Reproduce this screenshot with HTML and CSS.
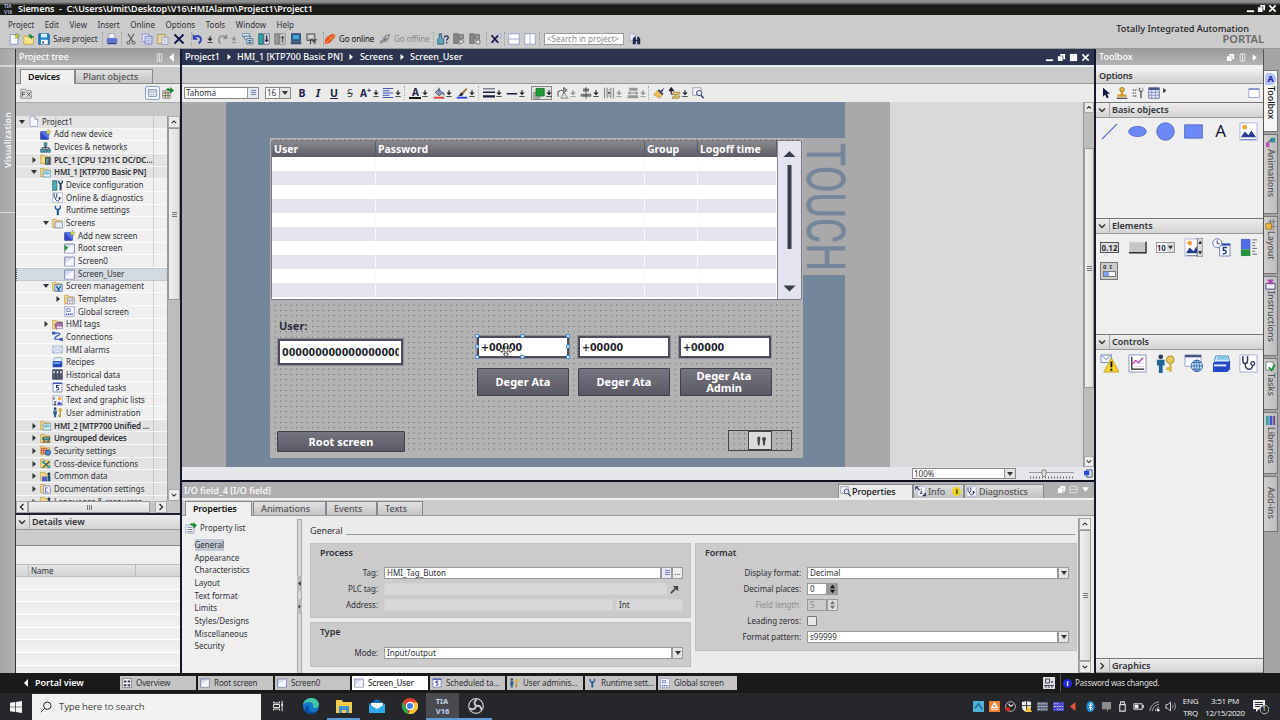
FILE: index.html
```html
<!DOCTYPE html>
<html lang="en">
<head>
    <meta charset="utf-8">
    <title>Siemens - Project1</title>
    <link rel="stylesheet" href="styles.css">
</head>
<body>
    <!-- icon set -->
    <svg class="sprite" aria-hidden="true">
        <symbol id="dd" viewBox="0 0 6 10"><path d="M0 4h6L3 7z M0 8h6v1H0z M2.4 1h1.2v4H2.4z" fill="currentColor"/></symbol>
        <symbol id="tri-d" viewBox="0 0 8 8"><path d="M1 2h6L4 6z" fill="currentColor"/></symbol>
        <symbol id="tri-r" viewBox="0 0 8 8"><path d="M2.5 1v6L6 4z" fill="currentColor"/></symbol>
        <symbol id="tri-l" viewBox="0 0 8 8"><path d="M6 0v8L2 4z" fill="currentColor"/></symbol>
        <symbol id="chev-d" viewBox="0 0 8 8"><path d="M1 2.5l3 3 3-3" fill="none" stroke="currentColor" stroke-width="1.4"/></symbol>
        <symbol id="chev-u" viewBox="0 0 8 8"><path d="M1 5.5l3-3 3 3" fill="none" stroke="currentColor" stroke-width="1.4"/></symbol>
        <symbol id="chev-l" viewBox="0 0 8 8"><path d="M5.5 1l-3 3 3 3" fill="none" stroke="currentColor" stroke-width="1.4"/></symbol>
        <symbol id="chev-r" viewBox="0 0 8 8"><path d="M2.5 1l3 3-3 3" fill="none" stroke="currentColor" stroke-width="1.4"/></symbol>
        <symbol id="w-min" viewBox="0 0 10 10"><path d="M1 7h8v2H1z" fill="#fff"/></symbol>
        <symbol id="w-rest" viewBox="0 0 10 10"><path d="M3.5 1H9v6H7V3H3.5z M1 3.5h5.2V9H1z" fill="#fff"/></symbol>
        <symbol id="w-max" viewBox="0 0 10 10"><path d="M1 1h8v8H1z" fill="#fff"/><path d="M1 2.6h8" stroke="#ccd" stroke-width=".6"/></symbol>
        <symbol id="w-close" viewBox="0 0 10 10"><path d="M1.5 1.5l7 7M8.5 1.5l-7 7" stroke="#fff" stroke-width="1.8"/></symbol>
        <symbol id="w-pin" viewBox="0 0 10 10"><path d="M2.5 1h5v8h-5zM5 1v8" fill="none" stroke="#e8e8ec"/></symbol>
        <symbol id="w-split" viewBox="0 0 10 10"><path d="M1 1.5h8v7H1zM1 5h8" fill="none" stroke="#e4e4e4"/></symbol>

        <symbol id="new" viewBox="0 0 16 16"><path d="M3 2h7l3 3v10H3z" fill="#fff" stroke="#7280c8"/><path d="M12 0l1 2.5L16 3l-2.4 1.6.6 3L12 6 9.700 7.500l.8-2.700L8.500 3l2.700-.3z" fill="#c8d838" stroke="#55662a" stroke-width=".5"/></symbol>
        <symbol id="open" viewBox="0 0 16 16"><path d="M1 4h5l1 2h7v9H1z" fill="#f8e08c" stroke="#b99b36"/><path d="M6 4c2-3 5-3 6 0h3l-4 4-3.500-4h2c-1-1-2-1-3.500 0z" fill="#168a36"/></symbol>
        <symbol id="save" viewBox="0 0 16 16"><path d="M1 1h13l1 2v12H1z" fill="#1f83c8" stroke="#0f4a94"/><path d="M4 1h8v5H4z" fill="#d7ecf9"/><path d="M4 9h9v6H4z" fill="#fff"/><path d="M6 11h2v3H6z" fill="#113e80"/></symbol>
        <symbol id="print" viewBox="0 0 16 16"><path d="M4 1h8l-1 6H3z" fill="#f2f4ff" stroke="#7d83a8" stroke-width=".8"/><path d="M1 7h14v6H1z" fill="#5d6fd0"/><path d="M2 13h12v2H2z" fill="#31408e"/></symbol>
        <symbol id="cut" viewBox="0 0 16 16"><path d="M4 1l6 10M12 1L6 11" stroke="#555" stroke-width="1.500"/><circle cx="4.500" cy="13" r="2" fill="none" stroke="#555" stroke-width="1.300"/><circle cx="11.500" cy="13" r="2" fill="none" stroke="#555" stroke-width="1.300"/></symbol>
        <symbol id="copy" viewBox="0 0 16 16"><path d="M1.500 1.500h9v10h-9z" fill="#e6e8fa" stroke="#7a80c0"/><path d="M5.500 4.500h9v10h-9z" fill="#fff" stroke="#4a55b8"/><path d="M7 7h6M7 9.500h6M7 12h6" stroke="#5561c0"/></symbol>
        <symbol id="paste" viewBox="0 0 16 16"><path d="M1 2h10v12H1z" fill="#eadb9b" stroke="#a08a4a"/><path d="M6.500 5.500h8v10h-8z" fill="#fff" stroke="#7a83ad"/><path d="M8 8h5M8 10.500h5M8 13h5" stroke="#8a93c0"/></symbol>
        <symbol id="del" viewBox="0 0 16 16"><path d="M2 2l12 12M14 2L2 14" stroke="#15184a" stroke-width="2.500"/></symbol>
        <symbol id="undo" viewBox="0 0 16 16"><path d="M3 5c8-3 12 3 6 9" fill="none" stroke="#3443b4" stroke-width="2.600"/><path d="M1 1v8h7z" fill="#3443b4"/></symbol>
        <symbol id="redo" viewBox="0 0 16 16"><path d="M13 5C5 2 1 8 6 14" fill="none" stroke="#8b8b8b" stroke-width="2"/><path d="M15 1v7H9z" fill="#8b8b8b"/></symbol>
        <symbol id="compile" viewBox="0 0 16 16"><path d="M1 1h9v4H1zM3 4h8v4H3z" fill="#fff" stroke="#3b6a92"/><path d="M6.500 7.500h8v7h-8z" fill="#d9ecf4" stroke="#33577c"/><path d="M8 10h5M8 12.500h5M10.500 9v5" stroke="#33577c"/></symbol>
        <symbol id="dl" viewBox="0 0 16 16"><path d="M1 1h6v14H1z" fill="#38a0a8" stroke="#174f5c"/><path d="M8 1h7v14H8z" fill="#eef" stroke="#555"/><path d="M10.500 3h2v6h2l-3 4-3-4h2z" fill="#1d2350"/></symbol>
        <symbol id="ul" viewBox="0 0 16 16"><path d="M1 1h6v14H1z" fill="#9a9a9a" stroke="#666"/><path d="M8 1h7v14H8z" fill="#ddd" stroke="#777"/><path d="M10.500 13h2V7h2l-3-4-3 4h2z" fill="#555"/></symbol>
        <symbol id="sim" viewBox="0 0 16 16"><path d="M2 1h12v9H2z" fill="#26669a" stroke="#1e3358"/><path d="M4 3h8v5H4z" fill="#48a8d0"/><path d="M1 11h14v4H1z" fill="#38507c"/></symbol>
        <symbol id="rt" viewBox="0 0 16 16"><path d="M1 1h11v9H1z" fill="#999" stroke="#555"/><path d="M3 3h7v4H3z" fill="#ddd"/><path d="M6 15V9h3l1 3 2-3h3M12 9v6" fill="none" stroke="#444" stroke-width="1.500"/></symbol>
        <symbol id="online" viewBox="0 0 16 16"><path d="M1 15c0-6 1-9 5-11l5-3 4 1-1 4-4 5c-2 3-5 3-9 4z" fill="#e8531c"/><path d="M1 15L14 2M7 5l4 4" stroke="#fbb27f"/></symbol>
        <symbol id="offline" viewBox="0 0 16 16"><path d="M1 15l1-5 4-2 2-5 7-2-2 7-5 4-3 1z" fill="#8f8f8f"/><path d="M4 5l7 7" stroke="#666"/><path d="M9 5l3-1-1 3z" fill="#eee"/></symbol>
        <symbol id="access" viewBox="0 0 16 16"><path d="M3 1h3v5l3 2v7H1V8l2-2z" fill="#58a8b8" stroke="#2c4b70"/><path d="M10 6c0-3 5-3 5 0 0 2-2 2-2 4M13 12v2" fill="none" stroke="#25305c" stroke-width="1.800"/></symbol>
        <symbol id="startcpu" viewBox="0 0 16 16"><path d="M1 1h6v13H1z" fill="#888" stroke="#666"/><path d="M8 2h6v6H8z" fill="#999" stroke="#666"/><path d="M9 8l6 3.500L9 15z" fill="#eee" stroke="#555"/></symbol>
        <symbol id="stopcpu" viewBox="0 0 16 16"><path d="M1 1h6v13H1z" fill="#888" stroke="#666"/><path d="M8 2h6v6H8z" fill="#999" stroke="#666"/><path d="M9.500 9.500h5v5h-5z" fill="#eee" stroke="#555"/></symbol>
        <symbol id="crossref" viewBox="0 0 16 16"><path d="M6 6h9V1h-4M6 15v-3h5" fill="#d5daf4" stroke="#9aa0c8"/><path d="M2 3l9 10M11 3L2 13" stroke="#15184a" stroke-width="2.400"/></symbol>
        <symbol id="splith" viewBox="0 0 16 16"><path d="M1 1h14v14H1zM1 8h14" fill="#fff" stroke="#8392cb"/></symbol>
        <symbol id="splitv" viewBox="0 0 16 16"><path d="M1 1h14v14H1zM8 1v14" fill="#fff" stroke="#8392cb"/></symbol>
        <symbol id="pane" viewBox="0 0 16 16"><path d="M1 2h14v12H1z" fill="#fff" stroke="#8392cb"/><path d="M1 3h14" stroke="#8392cb" stroke-width="2"/></symbol>
        <symbol id="find" viewBox="0 0 16 16"><path d="M1 1h7v9H1z" fill="#e8e8fb" stroke="#aab"/><path d="M5 15V8l2-3h2v4h2V5h2l2 3v7h-4v-4H9v4z" fill="#1e2554"/></symbol>

        <symbol id="page" viewBox="0 0 16 16"><path d="M3 1h7l4 4v10H3z" fill="#f8f8ff" stroke="#8c93b8"/><path d="M10 1v4h4" fill="#ccd" stroke="#8c93b8"/></symbol>
        <symbol id="addbox" viewBox="0 0 16 16"><path d="M1 4h11v11H1z" fill="#3048d0" stroke="#1b2778"/><path d="M1 4l2-1h10v10l-1 2" fill="#5870e8"/><path d="M12 0l1 3 3 .5-2.200 1.800.7 3L12 6.500 9.800 8.300l.6-3L8.500 3.500l2.700-.5z" fill="#d5e24a" stroke="#76862a" stroke-width=".5"/></symbol>
        <symbol id="net" viewBox="0 0 16 16"><path d="M6 1h4v5H6zM1 10h4v5H1zM6 10h4v5H6zM11 10h4v5h-4z" fill="#4aa3b8" stroke="#23405c" stroke-width=".8"/><path d="M8 6v4M3 10V8h10v2" fill="none" stroke="#222"/></symbol>
        <symbol id="folder" viewBox="0 0 16 16"><path d="M1 2h5l1 2h7v10H1z" fill="#f6d988" stroke="#bb9838"/></symbol>
        <symbol id="plc" viewBox="0 0 16 16"><use href="#folder"/><path d="M8 5h7v10H8z" fill="#58666e" stroke="#333"/><path d="M9.500 6h1.500v8H9.500z" fill="#58b8c0"/></symbol>
        <symbol id="hmi" viewBox="0 0 16 16"><use href="#folder"/><path d="M4.500 5.500h11v9h-11z" fill="#e8f4f8" stroke="#4c8fa8"/><path d="M6 7h8v4H6z" fill="#73c2d8"/></symbol>
        <symbol id="devconf" viewBox="0 0 16 16"><path d="M1 1h6v14H1z" fill="#48b0b8" stroke="#1f5560"/><path d="M9 1v3l2 2v9h3V6l2-2V1h-2v3h-3V1z" fill="#27406c"/></symbol>
        <symbol id="diag" viewBox="0 0 16 16"><path d="M1 1h14v14H1z" fill="#f7f7ff" stroke="#a4abd0"/><path d="M3 2v4c0 4 4 4 4 0V2M5 9c0 5 6 5 6 1" fill="none" stroke="#2c3560" stroke-width="1.400"/><circle cx="11" cy="9" r="1.600" fill="#2c3560"/></symbol>
        <symbol id="info" viewBox="0 0 16 16"><path d="M4 1h11v14H4z" fill="#f7f7ff" stroke="#a4abd0"/><path d="M1 1l6 5M1 1h4M1 1v4" stroke="#2c3560" stroke-width="1.600" fill="none"/><path d="M9 7v4M9 4v1.500M7.500 11h3M12 14h3v-3z" stroke="#2c3560" stroke-width="1.600" fill="#2c3560"/></symbol>
        <symbol id="wrench" viewBox="0 0 16 16"><path d="M4 1v4l3 3v7h3V8l3-3V1h-2v4H6V1z" fill="#24589c"/></symbol>
        <symbol id="screens" viewBox="0 0 16 16"><use href="#folder"/><path d="M4.500 5.500h11v9h-11z" fill="#e4e8f8" stroke="#6a78a8"/></symbol>
        <symbol id="screen" viewBox="0 0 16 16"><path d="M1 1.500h14v13H1z" fill="#d6dcf4" stroke="#5a6494"/><path d="M2 10L14 2v12H2z" fill="#f4f5fd"/></symbol>
        <symbol id="root" viewBox="0 0 16 16"><use href="#screen"/><path d="M1 3l5 4-5 5z" fill="#19963c"/></symbol>
        <symbol id="smgmt" viewBox="0 0 16 16"><use href="#folder"/><path d="M4 5h11v10H4z" fill="#bcd4ee" stroke="#4a6ca0"/><path d="M6 6l3.500 4L13 6v3l-2 2v4H8v-4L6 9z" fill="#24509c"/></symbol>
        <symbol id="templ" viewBox="0 0 16 16"><use href="#folder"/><path d="M5 5.500h10v9H5zM5 9h10M8 9v5M12 6v8" fill="#eee" stroke="#888ca0"/></symbol>
        <symbol id="global" viewBox="0 0 16 16"><path d="M1 1h14v14H1z" fill="#f8f8ff" stroke="#8890c0"/><path d="M4 4h5v4H4z" fill="none" stroke="#4055b0"/><path d="M3 12h10" stroke="#4055b0" stroke-width="2" stroke-dasharray="2 1"/></symbol>
        <symbol id="tags" viewBox="0 0 16 16"><use href="#folder"/><path d="M4 8l4-3h7v9H6z" fill="#a674a8" stroke="#5c3770"/><path d="M7 11h8v3H7z" fill="#f4e6f4"/></symbol>
        <symbol id="conn" viewBox="0 0 16 16"><path d="M2 3h8c6 3-8 4-6 9h8" fill="none" stroke="#3a5ac0" stroke-width="1.800"/><path d="M0 1h5v4H0zM11 10h5v4h-5z" fill="#3a5ac0"/></symbol>
        <symbol id="mail" viewBox="0 0 16 16"><path d="M1 3h14v10H1zl7 6 7-6M1 13l5-5M15 13l-5-5" fill="#e6ecfb" stroke="#8ea0d0"/></symbol>
        <symbol id="recipe" viewBox="0 0 16 16"><path d="M4 1h10l1 6H2z" fill="#e9f4fb" stroke="#6690b8"/><path d="M1 6h13l1 3v5l-2 1H1z" fill="#1f49b4"/><path d="M2 8h10v2H2z" fill="#8fb7ee"/></symbol>
        <symbol id="hist" viewBox="0 0 16 16"><path d="M1 1h4v14H1zM6 1h4v14H6zM11 1h4v14h-4z" fill="#5a6078" stroke="#252a3c"/><path d="M2 3h2v3H2zM7 3h2v3H7zM12 3h2v3h-2z" fill="#e8e8f0"/></symbol>
        <symbol id="task" viewBox="0 0 16 16"><path d="M1.500 1.500h13v13h-13z" fill="#fff" stroke="#5664ac"/><path d="M1 1h14v2H1z" fill="#4658b8"/><path d="M10.500 5H6.500v3c4-1 5 4 0 4" fill="none" stroke="#1c2b60" stroke-width="1.500"/></symbol>
        <symbol id="lists" viewBox="0 0 16 16"><path d="M1 1h14v14H1z" fill="#f6f6ff" stroke="#98a0c8"/><path d="M3 3v4M3 10h3l-3 4h3" fill="none" stroke="#223" stroke-width="1.300"/><circle cx="11" cy="5" r="2.500" fill="#f1b136"/><path d="M7 14l3-5 2 3 1-2 2 4z" fill="#3550b0"/></symbol>
        <symbol id="users" viewBox="0 0 16 16"><circle cx="4.500" cy="2.500" r="2" fill="#284870"/><path d="M2 5h5v6H6v4H3v-4H2z" fill="#286090"/><circle cx="12" cy="4.500" r="3" fill="#d6b446"/><path d="M11 7h2v8h-2zM9 12h2v2H9z" fill="#b8922e"/></symbol>
        <symbol id="ungrp" viewBox="0 0 16 16"><use href="#folder"/><path d="M4 6h10v4H4zM4 13h11M6 10v3M12 10v3" fill="#52b0a0" stroke="#20303c"/></symbol>
        <symbol id="secur" viewBox="0 0 16 16"><use href="#folder"/><path d="M2 5h8v7H2zM2 8h8M5 5v7" fill="#f6b098" stroke="#b84020"/><circle cx="11.500" cy="11" r="4" fill="#4684c8" stroke="#214c80"/></symbol>
        <symbol id="cross" viewBox="0 0 16 16"><use href="#folder"/><path d="M4 5l10 9M14 5L4 14" stroke="#205a60" stroke-width="1.800"/><path d="M3 4h4v4H3zM11 11h4v4h-4z" fill="#38a0a0"/></symbol>
        <symbol id="common" viewBox="0 0 16 16"><use href="#folder"/><path d="M3 8h7v7H3z" fill="#4a5ad4"/><path d="M11 6h4v9h-4z" fill="#1f4f78"/><circle cx="13" cy="4" r="2" fill="#1f3858"/></symbol>
        <symbol id="docs" viewBox="0 0 16 16"><use href="#folder"/><path d="M5 4h8l2 2v9H5z" fill="#eef" stroke="#7078b8"/><path d="M11 7H8v6h3" fill="none" stroke="#4c55a4" stroke-width="1.200"/></symbol>
        <symbol id="grid" viewBox="0 0 16 16"><path d="M1.500 2.500h13v11h-13z" fill="#fff" stroke="#56669c"/><path d="M2 5h12" stroke="#56669c"/><path d="M3 8h10M3 11h10" stroke="#7d89b4" stroke-width="1.500" stroke-dasharray="2 1"/></symbol>
        <symbol id="overview" viewBox="0 0 16 16"><path d="M1 1h14v14H1z" fill="#fff" stroke="#556"/><path d="M3 4h4v3H3zM9 4h4v3H9zM3 10h4v3H3zM9 10h4v3H9z" fill="#33364e"/></symbol>
        <symbol id="export" viewBox="0 0 16 16"><path d="M1 5h10v10H1z" fill="#f5e9c2" stroke="#777"/><path d="M1 8h10M1 11.500h10M4.500 5v10M8 5v10" stroke="#555"/><path d="M5 4c2-3 4-3 6-1V0l5 4.500L11 9V6C9 4 7 4 5 4z" fill="#138a2e"/></symbol>
        <symbol id="fx" viewBox="0 0 16 16"><path d="M1 3h6l1 2h7v10H1z" fill="#e3e3e3" stroke="#777"/><path d="M3 7h4M3 10h4M3 7v6M9 7l5 6M14 7l-5 6" stroke="#555" stroke-width="1.300"/></symbol>
        <symbol id="proplist" viewBox="0 0 16 16"><path d="M1 4h11v11H1z" fill="#fff" stroke="#8590b8"/><path d="M3 7h7M3 10h7M3 13h7" stroke="#48537c"/><path d="M6 4c2-3 4-3 5-1V0l5 4.500L11 9V6C9 4 8 4 6 4z" fill="#138a2e"/></symbol>

        <symbol id="align" viewBox="0 0 16 16"><path d="M1 2h14M1 5h9M1 8h14M1 11h9M1 14h14" stroke="#4355b4" stroke-width="1.500"/></symbol>
        <symbol id="fill" viewBox="0 0 16 16"><path d="M3 7l5-4 5 5-5 4z" fill="#8f96bd" stroke="#3c4370"/><path d="M8 1v5M13 7l2 4" stroke="#3c4370" stroke-width="1.500"/><path d="M1 13h14v2.500H1z" fill="#e33b2e"/></symbol>
        <symbol id="brush" viewBox="0 0 16 16"><path d="M14 1L7 8l2 2 6-7z" fill="#96723a"/><path d="M7 7l3 3c-2 2-4 3-7 2 2-1 2-3 4-5z" fill="#252b54"/><path d="M1 13h14v2.500H1z" fill="#3340e0"/></symbol>
        <symbol id="lwidth" viewBox="0 0 16 16"><path d="M0 2h16v1H0zM0 6h16v2H0zM0 11h16v3H0z" fill="#1a1e40"/></symbol>
        <symbol id="lstyle" viewBox="0 0 16 16"><path d="M1 8h14v2H1z" fill="#1a1e40"/></symbol>
        <symbol id="order" viewBox="0 0 16 16"><path d="M1 7h8v8H1z" fill="#a9b6ae" stroke="#777"/><path d="M4 2h11v10H4z" fill="#1f9838" stroke="#11702a"/></symbol>
        <symbol id="rotate" viewBox="0 0 16 16"><path d="M5 15L9 7l6 8z" fill="#ddd" stroke="#777"/><path d="M2 13C-1 6 4 3 9 5M9 1v7l4-4z" fill="none" stroke="#666" stroke-width="1.500"/></symbol>
        <symbol id="alignv" viewBox="0 0 16 16"><path d="M4 2h8v4H4zM1 9h14v4H1z" fill="#777"/><path d="M8 0v16" stroke="#444"/></symbol>
        <symbol id="dist" viewBox="0 0 16 16"><path d="M2 1v14M14 1v14M5.500 1v14M10.500 1v14" stroke="#888" stroke-width="1.500"/><path d="M8 3v2M8 11v2M7 7h2v2H7z" stroke="#666"/></symbol>
        <symbol id="size" viewBox="0 0 16 16"><path d="M3 1h11v4H3zM1 11h14v4H1z" fill="#999"/><path d="M2 8h12M4 6L2 8l2 2M12 6l2 2-2 2" stroke="#555" fill="none"/></symbol>
        <symbol id="fmt" viewBox="0 0 16 16"><path d="M15 1l-5 4 2 2z" fill="#263064"/><path d="M8 3l6 6-2 2-6-6z" fill="#37406e"/><path d="M6 5l6 6-3 4-8-5z" fill="#f0bf50" stroke="#a8762c" stroke-width=".7"/></symbol>
        <symbol id="layers" viewBox="0 0 16 16"><path d="M3 10V3M0 5l3-4 3 4z" stroke="#223" stroke-width="1.500"/><path d="M6 7h9l-2 3H4zM6 12h9l-2 3H4z" fill="#ecd07a" stroke="#8c7430"/></symbol>
        <symbol id="zoomsel" viewBox="0 0 16 16"><path d="M1 1h11v10H1z" fill="#f6f6fc" stroke="#7c84a0"/><circle cx="9.500" cy="8" r="3.500" fill="#dfe8f6" stroke="#3c466c" stroke-width="1.300"/><path d="M12 11l3.500 4" stroke="#3c466c" stroke-width="2"/></symbol>

        <symbol id="arrow" viewBox="0 0 16 16"><path d="M4 1v12l3-3 2 5 2.500-1-2-5h4z" fill="#12163c"/></symbol>
        <symbol id="stamp" viewBox="0 0 16 16"><circle cx="8" cy="3.500" r="3" fill="#e9b534" stroke="#8e6814"/><path d="M7 6h2l1 4h4v3H2v-3h4z" fill="#d39a26"/><path d="M1 15h14" stroke="#333" stroke-width="1.500"/></symbol>
        <symbol id="tools" viewBox="0 0 16 16"><path d="M1 4h6M1 8h4M1 12h6" stroke="#666" stroke-width="2" stroke-dasharray="2 1"/><path d="M9 1v4l2 2v8h2V7l2-2V1h-1v4h-3V1z" fill="#666"/></symbol>
        <symbol id="calgrid" viewBox="0 0 16 16"><path d="M1 1h14v14H1z" fill="#e8ebfa" stroke="#48568c"/><path d="M1 2.500h14" stroke="#48568c" stroke-width="3"/><path d="M1 7h14M1 11h14M5 4v11M10 4v11" stroke="#7882b0"/></symbol>

        <symbol id="line" viewBox="0 0 20 20"><path d="M2 18L18 2" stroke="#4a5fd0" stroke-width="1.200"/></symbol>
        <symbol id="ellipse" viewBox="0 0 20 20"><ellipse cx="10" cy="10" rx="9.300" ry="5.300" fill="#6d88f4" stroke="#5b6cc0"/></symbol>
        <symbol id="circle" viewBox="0 0 20 20"><circle cx="10" cy="10" r="9.200" fill="#6d88f8" stroke="#5b6cc0"/></symbol>
        <symbol id="rect" viewBox="0 0 20 20"><path d="M.7 3h18.600v14H.7z" fill="#6d88f8" stroke="#5b6cc0"/></symbol>
        <symbol id="picture" viewBox="0 0 20 20"><path d="M1 1h18v18H1z" fill="#fff" stroke="#aab2d8"/><path d="M2 16l4-6 4 4 3-5 5 7z" fill="#243c94"/><path d="M2 18h16v1H2z" fill="#7d88c8"/><circle cx="6" cy="5.500" r="2.500" fill="#f0a63c"/></symbol>
        <symbol id="button" viewBox="0 0 20 20"><path d="M1 4h18v12H1z" fill="#c6c6c6"/><path d="M1 16V4h18" fill="none" stroke="#eee"/><path d="M1 15.500h18V4" fill="none" stroke="#333" stroke-width="1.500"/></symbol>
        <symbol id="picio" viewBox="0 0 20 20"><use href="#picture"/><path d="M14 0h6v20h-6z" fill="#d8d8d8" stroke="#777"/><path d="M15 6l2-3 2 3zM15 14l2 3 2-3z" fill="#111"/></symbol>
        <symbol id="datetime" viewBox="0 0 20 20"><path d="M8 6h11v13H8z" fill="#f6f7ff" stroke="#7a85c0"/><path d="M8 6h11v2H8z" fill="#3048b8"/><path d="M16 10h-4v3c4-1 4 4-.5 3.500" fill="none" stroke="#223c80" stroke-width="1.500"/><circle cx="5.500" cy="5.500" r="4.700" fill="#f6f7ff" stroke="#6874a8"/><path d="M5.500 2.500V6H8" fill="none" stroke="#334"/></symbol>
        <symbol id="bar" viewBox="0 0 20 20"><path d="M2 1h10v11H2z" fill="#526be0"/><path d="M2 12h10v7H2z" fill="#27903e"/><path d="M14 2h5M14 5h3M14 8h3M14 11h5M14 14h3M14 17h5" stroke="#666"/></symbol>
        <symbol id="alarm" viewBox="0 0 20 20"><path d="M1 1h11v8H1zl5.500 5L12 1" fill="#eef2ff" stroke="#7b89c8"/><path d="M12 4l8 15H4z" fill="#f5d52c" stroke="#b8941a" stroke-width=".8"/><path d="M12 8v6M12 15.500v2" stroke="#111" stroke-width="2"/></symbol>
        <symbol id="trend" viewBox="0 0 20 20"><path d="M1 1h18v18H1z" fill="#fff" stroke="#8791c8"/><path d="M4 3v13h13" fill="none" stroke="#222" stroke-width="1.300"/><path d="M4 11l4-4 3 2 5-5" fill="none" stroke="#c048b8" stroke-width="1.500"/><path d="M6 13h10M6 10h10" stroke="#ccd"/></symbol>
        <symbol id="userkey" viewBox="0 0 20 20"><circle cx="5" cy="3" r="2.500" fill="#2d3c54"/><path d="M1 6h8v6H7v8H3v-8H1z" fill="#1f6494"/><circle cx="15" cy="6" r="4" fill="#ecca58" stroke="#a8842a"/><path d="M14 10h2.500v9H14zM11 14h3v3h-3z" fill="#dcb344"/></symbol>
        <symbol id="html" viewBox="0 0 20 20"><path d="M1 1h17v12H1z" fill="#f6f7ff" stroke="#98a0c4"/><path d="M1 1h17v2.500H1z" fill="#48547c"/><circle cx="13.500" cy="12.500" r="6" fill="#cfe6fa" stroke="#3a6ca8"/><path d="M7.500 12.500h12M13.500 6.500v12M9 9h9M9 16h9" stroke="#3a6ca8"/><ellipse cx="13.500" cy="12.500" rx="3" ry="6" fill="none" stroke="#3a6ca8"/></symbol>
        <symbol id="recipev" viewBox="0 0 20 20"><path d="M4 2h13l2 7H2z" fill="#d9eefa" stroke="#4d88b8"/><path d="M6 2h10l1 4H5z" fill="#86c6e4"/><path d="M1 10l3-2h15v8l-3 3H1z" fill="#2346c8"/><path d="M2 11h13v2H2z" fill="#e8f0ff"/></symbol>
        <symbol id="steth" viewBox="0 0 20 20"><path d="M1 1h18v18H1z" fill="#fff" stroke="#a4abd0"/><path d="M5 3H4v4c0 4 5 4 5 0V3H8M6.500 10c0 8 8 8 8 1" fill="none" stroke="#2c3560" stroke-width="1.500"/><circle cx="14.500" cy="10" r="2" fill="#fff" stroke="#2c3560" stroke-width="1.300"/></symbol>
    </svg>

    <div class="titlebar">
        <span class="logo">TIA<br>V16</span>
        <span class="title">Siemens&nbsp; -&nbsp; C:\Users\Umit\Desktop\V16\HMIAlarm\Project1\Project1</span>
        <span class="winbtns"><svg><use href="#w-min"/></svg><svg><use href="#w-rest"/></svg><svg><use href="#w-close"/></svg></span>
    </div>

    <div class="top">
        <div class="top-left">
            <div class="menu"><span>Project</span><span>Edit</span><span>View</span><span>Insert</span><span>Online</span><span>Options</span><span>Tools</span><span>Window</span><span>Help</span></div>
            <div class="toolbar">
                <div class="grp g1"><svg><use href="#new"/></svg><svg><use href="#open"/></svg><svg><use href="#save"/></svg><span>Save project</span></div>
                <div class="grp g2"><svg><use href="#print"/></svg></div>
                <div class="grp g3"><svg><use href="#cut"/></svg><svg><use href="#copy"/></svg><svg><use href="#paste"/></svg><svg><use href="#del"/></svg></div>
                <div class="grp g4"><svg><use href="#undo"/></svg><svg class="dd"><use href="#dd"/></svg><svg><use href="#redo"/></svg><svg class="dd off"><use href="#dd"/></svg></div>
                <div class="grp g5"><svg><use href="#compile"/></svg><svg><use href="#dl"/></svg><svg><use href="#ul"/></svg><svg><use href="#sim"/></svg><svg><use href="#rt"/></svg></div>
                <div class="grp g6"><svg><use href="#online"/></svg><span class="on">Go online</span><svg><use href="#offline"/></svg><span class="off">Go offline</span></div>
                <div class="grp g7"><svg><use href="#access"/></svg><svg><use href="#startcpu"/></svg><svg><use href="#stopcpu"/></svg></div>
                <div class="grp g8"><svg><use href="#crossref"/></svg></div>
                <div class="grp g9"><svg><use href="#splith"/></svg><svg><use href="#splitv"/></svg></div>
                <div class="grp g10"><div class="search">&lt;Search in project&gt;</div><svg><use href="#find"/></svg></div>
            </div>
        </div>
        <div class="brand"><div>Totally Integrated Automation</div><b>PORTAL</b></div>
    </div>

    <div class="main">
        <div class="strip"><div class="strip-tab">Visualization</div></div>

        <div class="left">
            <div class="phead"><span>Project tree</span><svg><use href="#w-pin"/></svg><svg class="white"><use href="#tri-l"/></svg></div>
            <div class="tabs"><span class="tab act t-dev">Devices</span><span class="tab t-plant">Plant objects</span></div>
            <div class="ltools"><svg><use href="#fx"/></svg><i></i><svg class="sel"><use href="#grid"/></svg><svg><use href="#export"/></svg></div>
            <div class="lgap"></div>
            <div class="treewrap">
                <div class="tree">
                    <div class="row l0 dark"><svg class="ar"><use href="#tri-d"/></svg><svg><use href="#page"/></svg>Project1</div>
                    <div class="row l1"><i></i><svg><use href="#addbox"/></svg>Add new device</div>
                    <div class="row l1"><i></i><svg><use href="#net"/></svg>Devices &amp; networks</div>
                    <div class="row l1 bold dark"><svg class="ar"><use href="#tri-r"/></svg><svg><use href="#plc"/></svg>PLC_1 [CPU 1211C DC/DC...</div>
                    <div class="row l1 bold dark"><svg class="ar"><use href="#tri-d"/></svg><svg><use href="#hmi"/></svg>HMI_1 [KTP700 Basic PN]</div>
                    <div class="row l2"><i></i><svg><use href="#devconf"/></svg>Device configuration</div>
                    <div class="row l2"><i></i><svg><use href="#diag"/></svg>Online &amp; diagnostics</div>
                    <div class="row l2"><i></i><svg><use href="#wrench"/></svg>Runtime settings</div>
                    <div class="row l2"><svg class="ar"><use href="#tri-d"/></svg><svg><use href="#screens"/></svg>Screens</div>
                    <div class="row l3"><i></i><svg><use href="#addbox"/></svg>Add new screen</div>
                    <div class="row l3"><i></i><svg><use href="#root"/></svg>Root screen</div>
                    <div class="row l3"><i></i><svg><use href="#screen"/></svg>Screen0</div>
                    <div class="row l3 cur"><i></i><svg><use href="#screen"/></svg>Screen_User</div>
                    <div class="row l2"><svg class="ar"><use href="#tri-d"/></svg><svg><use href="#smgmt"/></svg>Screen management</div>
                    <div class="row l3"><svg class="ar"><use href="#tri-r"/></svg><svg><use href="#templ"/></svg>Templates</div>
                    <div class="row l3"><i></i><svg><use href="#global"/></svg>Global screen</div>
                    <div class="row l2"><svg class="ar"><use href="#tri-r"/></svg><svg><use href="#tags"/></svg>HMI tags</div>
                    <div class="row l2"><i></i><svg><use href="#conn"/></svg>Connections</div>
                    <div class="row l2"><i></i><svg><use href="#mail"/></svg>HMI alarms</div>
                    <div class="row l2"><i></i><svg><use href="#recipe"/></svg>Recipes</div>
                    <div class="row l2"><i></i><svg><use href="#hist"/></svg>Historical data</div>
                    <div class="row l2"><i></i><svg><use href="#task"/></svg>Scheduled tasks</div>
                    <div class="row l2"><i></i><svg><use href="#lists"/></svg>Text and graphic lists</div>
                    <div class="row l2"><i></i><svg><use href="#users"/></svg>User administration</div>
                    <div class="row l1 bold dark"><svg class="ar"><use href="#tri-r"/></svg><svg><use href="#hmi"/></svg>HMI_2 [MTP700 Unified ...</div>
                    <div class="row l1 bold dark"><svg class="ar"><use href="#tri-r"/></svg><svg><use href="#ungrp"/></svg>Ungrouped devices</div>
                    <div class="row l1 dark"><svg class="ar"><use href="#tri-r"/></svg><svg><use href="#secur"/></svg>Security settings</div>
                    <div class="row l1 dark"><svg class="ar"><use href="#tri-r"/></svg><svg><use href="#cross"/></svg>Cross-device functions</div>
                    <div class="row l1 dark"><svg class="ar"><use href="#tri-r"/></svg><svg><use href="#common"/></svg>Common data</div>
                    <div class="row l1 dark"><svg class="ar"><use href="#tri-r"/></svg><svg><use href="#docs"/></svg>Documentation settings</div>
                    <div class="row l1 dark"><svg class="ar"><use href="#tri-r"/></svg><svg><use href="#common"/></svg>Languages &amp; resources</div>
                </div>
                <div class="vscroll tree-v"><svg><use href="#chev-u"/></svg><div class="thumb"><u class="grip"></u></div><div class="fillr"></div><svg><use href="#chev-d"/></svg></div>
            </div>
            <div class="hscroll"><svg><use href="#chev-l"/></svg><div class="thumb"><u class="grip gv"></u></div><svg class="r"><use href="#chev-r"/></svg></div>
            <div class="sec details"><svg><use href="#chev-d"/></svg><span>Details view</span></div>
            <div class="dgap"></div>
            <div class="dblank"></div>
            <div class="dhead"><span></span><span class="nm">Name</span><span></span></div>
            <div class="dbody"></div>
        </div>

        <div class="center">
            <div class="ehead"><span>Project1</span><svg><use href="#tri-r"/></svg><span>HMI_1 [KTP700 Basic PN]</span><svg><use href="#tri-r"/></svg><span>Screens</span><svg><use href="#tri-r"/></svg><span>Screen_User</span>
                <div class="winbtns"><svg><use href="#w-min"/></svg><svg><use href="#w-rest"/></svg><svg><use href="#w-max"/></svg><svg><use href="#w-close"/></svg></div></div>
            <div class="egap"></div>
            <div class="etools">
                <div class="combo c-font"><span>Tahoma</span><em class="lst"></em></div>
                <div class="combo c-size"><span>16</span><em><svg><use href="#tri-d"/></svg></em></div>
                <b class="ch">B</b><b class="ch it">I</b><b class="ch un">U</b><span class="ch st">S</span>
                <div class="pair p1"><b>A<sup>+</sup></b><svg class="dd"><use href="#dd"/></svg></div>
                <div class="pair p2"><svg><use href="#align"/></svg><svg class="dd"><use href="#dd"/></svg></div>
                <div class="pair sp"><b class="fc">A</b><svg class="dd"><use href="#dd"/></svg></div>
                <div class="pair"><svg><use href="#fill"/></svg><svg class="dd"><use href="#dd"/></svg></div>
                <div class="pair"><svg><use href="#brush"/></svg><svg class="dd"><use href="#dd"/></svg></div>
                <div class="pair sp"><svg><use href="#lwidth"/></svg><svg class="dd"><use href="#dd"/></svg></div>
                <div class="pair"><svg><use href="#lstyle"/></svg><svg class="dd"><use href="#dd"/></svg></div>
                <div class="pair sp box"><svg><use href="#order"/></svg><svg class="dd"><use href="#dd"/></svg></div>
                <div class="pair"><svg><use href="#rotate"/></svg><svg class="dd off"><use href="#dd"/></svg></div>
                <div class="pair"><svg><use href="#alignv"/></svg><svg class="dd"><use href="#dd"/></svg></div>
                <div class="pair"><svg><use href="#dist"/></svg><svg class="dd off"><use href="#dd"/></svg></div>
                <div class="pair"><svg><use href="#size"/></svg><svg class="dd off"><use href="#dd"/></svg></div>
                <div class="pair sp one"><svg><use href="#fmt"/></svg></div>
                <div class="pair"><svg><use href="#layers"/></svg><svg class="dd"><use href="#dd"/></svg></div>
                <div class="pair one"><svg><use href="#zoomsel"/></svg></div>
            </div>

            <div class="work">
                <div class="canvas">
                    <div class="panel"></div>
                    <svg class="touch" viewBox="0 0 42 137"><text transform="translate(3.500 5) rotate(90)" x="0" y="0" textLength="128" lengthAdjust="spacingAndGlyphs">TOUCH</text></svg>
                    <div class="screen">
                        <svg class="dots-bg" width="533" height="320">
                            <pattern id="dotgrid" x="4.800" y="1.300" width="5.333" height="5.333" patternUnits="userSpaceOnUse"><path d="M0 0h.9v.9H0z" fill="#4c4c4c"/></pattern>
                            <rect width="530" height="316" fill="url(#dotgrid)"/>
                        </svg>
                        <div class="uv">
                            <div class="uvt">
                                <div class="uvh"><span class="u1">User</span><span class="u2">Password</span><span class="u3">Group</span><span class="u4">Logoff time</span></div>
                                <div class="uvb"><span class="u1"></span><span class="u2"></span><span class="u3"></span><span class="u4"></span></div>
                            </div>
                            <svg class="uvs" viewBox="0 0 23 158"><path d="M5.500 16h12l-6-6z M5.500 144.500h12l-6 6z M9.500 24h4v84h-4z" fill="#3a3d4b"/></svg>
                        </div>
                        <div class="lbl">User:</div>
                        <div class="io io0"><span>000000000000000000</span></div>
                        <div class="io io1"><span>+00000</span></div>
                        <div class="io io2"><span>+00000</span></div>
                        <div class="io io3"><span>+00000</span></div>
                        <div class="btn b1">Deger Ata</div>
                        <div class="btn b2">Deger Ata</div>
                        <div class="btn b3">Deger Ata<br>Admin</div>
                        <div class="btn b4">Root screen</div>
                        <div class="sw"><div><svg viewBox="0 0 16 16"><path d="M3 5h4l-1 9H4zM10 5h4l-1 9h-2z" fill="#444"/><circle cx="5" cy="4" r="2" fill="#444"/><circle cx="12" cy="5" r="2.500" fill="#444"/></svg></div></div>
                        <svg class="handles" viewBox="0 0 98 28"><g fill="#dff0ff" stroke="#3b82d8" stroke-width=".9"><path d="M1.500 1.500h3v3h-3zM47 1.500h3v3h-3zM92.500 1.500h3v3h-3zM1.500 12h3v3h-3zM92.500 12h3v3h-3zM1.500 22.500h3v3h-3zM47 22.500h3v3h-3zM92.500 22.500h3v3h-3z"/></g></svg>
                        <svg class="move" viewBox="0 0 14 14"><path d="M7 0l2.500 3H8v3h3V4.500L14 7l-3 2.500V8H8v3h1.500L7 14l-2.500-3H6V8H3v1.500L0 7l3-2.500V6h3V3H4.500z" fill="#fff" stroke="#222" stroke-width=".8"/></svg>
                    </div>
                </div>
                <div class="vscroll work-v"><svg><use href="#chev-u"/></svg><div class="space"></div><div class="thumb"><u class="grip"></u></div><div class="fillr"></div><svg><use href="#chev-d"/></svg></div>
            </div>
            <div class="zoombar"><div class="combo c-zoom"><span>100%</span><em><svg><use href="#tri-d"/></svg></em></div>
                <svg class="slider" viewBox="0 0 46 10"><path d="M0 3.500h45" stroke="#999"/><path d="M1 8.500h45" stroke="#666" stroke-width="2" stroke-dasharray="1 2"/><path d="M13 1h4v5l-2 2-2-2z" fill="#ddd" stroke="#888"/></svg>
                <svg class="fit" viewBox="0 0 10 10"><path d="M3 1h6v8H3z" fill="#e8ecfa" stroke="#445"/><path d="M0 2h6v5H0z" fill="#2a50d0"/></svg></div>

            <div class="insp">
                <div class="ihead"><span class="it">I/O field_4 [I/O field]</span>
                    <div class="itabs"><span class="itab act i1"><svg><use href="#zoomsel"/></svg>Properties</span><span class="itab i2"><svg><use href="#info"/></svg>Info<b>i</b></span><span class="itab i3"><svg><use href="#diag"/></svg>Diagnostics</span></div>
                    <div class="ibtns"><svg><use href="#w-rest"/></svg><svg><use href="#w-split"/></svg><svg class="white"><use href="#tri-d"/></svg></div>
                </div>
                <div class="tabs ptabs"><span class="tab act q1">Properties</span><span class="tab q2">Animations</span><span class="tab q3">Events</span><span class="tab q4">Texts</span></div>
                <div class="ibody">
                    <div class="plist">
                        <div class="ptitle"><svg><use href="#proplist"/></svg>Property list</div>
                        <div class="pi"><span class="on">General</span></div><div class="pi"><span>Appearance</span></div><div class="pi"><span>Characteristics</span></div><div class="pi"><span>Layout</span></div><div class="pi"><span>Text format</span></div><div class="pi"><span>Limits</span></div><div class="pi"><span>Styles/Designs</span></div><div class="pi"><span>Miscellaneous</span></div><div class="pi"><span>Security</span></div>
                    </div>
                    <div class="splitter"><svg><use href="#tri-l"/></svg><svg><use href="#tri-r"/></svg></div>
                    <div class="form">
                        <div class="ftitle"><span>General</span><i></i></div>
                        <div class="fcols">
                            <div class="fcol">
                                <div class="box proc">
                                    <h4>Process</h4>
                                    <div class="fr"><label>Tag:</label><div class="inp grow">HMI_Tag_Buton</div><em class="lst"></em><em class="dots">...</em></div>
                                    <div class="fr"><label>PLC tag:</label><div class="inp dis grow"></div><svg class="link" viewBox="0 0 10 10"><path d="M1 9l5-5" stroke="#444" stroke-width="1.800"/><path d="M3 1h6v6z" fill="#444"/></svg></div>
                                    <div class="fr"><label>Address:</label><div class="inp dis addr"></div><div class="inp dis grow">Int</div></div>
                                </div>
                                <div class="box type">
                                    <h4>Type</h4>
                                    <div class="fr"><label>Mode:</label><div class="inp grow">Input/output</div><em class="drop"><svg><use href="#tri-d"/></svg></em></div>
                                </div>
                            </div>
                            <div class="box format">
                                <h4>Format</h4>
                                <div class="fr"><label>Display format:</label><div class="inp grow">Decimal</div><em class="drop"><svg><use href="#tri-d"/></svg></em></div>
                                <div class="fr"><label>Decimal places:</label><div class="inp num">0</div><em class="spin"><svg viewBox="0 0 10 12"><path d="M2 5h6L5 1zM2 7h6l-3 4z" fill="#111"/></svg></em></div>
                                <div class="fr gray"><label>Field length:</label><div class="inp num">5</div><em class="spin"><svg viewBox="0 0 10 12"><path d="M2 5h6L5 1zM2 7h6l-3 4z" fill="#777"/></svg></em></div>
                                <div class="fr"><label>Leading zeros:</label><div class="chk"></div></div>
                                <div class="fr"><label>Format pattern:</label><div class="inp grow">s99999</div><em class="drop"><svg><use href="#tri-d"/></svg></em></div>
                            </div>
                        </div>
                    </div>
                    <div class="vscroll form-v"><svg><use href="#chev-u"/></svg><div class="thumb"><u class="grip"></u></div><svg><use href="#chev-d"/></svg></div>
                </div>
            </div>
        </div>

        <div class="toolbox">
            <div class="phead"><span>Toolbox</span><svg><use href="#w-rest"/></svg><svg><use href="#w-pin"/></svg><svg class="white"><use href="#tri-r"/></svg></div>
            <div class="opts">Options</div>
            <div class="ttools"><svg><use href="#arrow"/></svg><svg><use href="#stamp"/></svg><svg><use href="#tools"/></svg><svg><use href="#calgrid"/></svg><svg class="sm"><use href="#tri-r"/></svg><i></i><svg><use href="#pane"/></svg></div>
            <div class="sec"><svg><use href="#chev-d"/></svg><span>Basic objects</span></div>
            <div class="pal h1"><svg><use href="#line"/></svg><svg><use href="#ellipse"/></svg><svg><use href="#circle"/></svg><svg><use href="#rect"/></svg><span class="bigA">A</span><svg><use href="#picture"/></svg></div>
            <div class="sec"><svg><use href="#chev-d"/></svg><span>Elements</span></div>
            <div class="pal h1"><span class="iof">0.12</span><svg><use href="#button"/></svg><span class="sio">10<svg><use href="#tri-d"/></svg></span><svg><use href="#picio"/></svg><svg><use href="#datetime"/></svg><svg><use href="#bar"/></svg><span class="swi"><small>0&nbsp; I</small><u></u></span></div>
            <div class="sec"><svg><use href="#chev-d"/></svg><span>Controls</span></div>
            <div class="pal h2"><svg><use href="#alarm"/></svg><svg><use href="#trend"/></svg><svg><use href="#userkey"/></svg><svg><use href="#html"/></svg><svg><use href="#recipev"/></svg><svg><use href="#steth"/></svg></div>
            <div class="sec last"><svg><use href="#chev-r"/></svg><span>Graphics</span></div>
        </div>

        <div class="rtabs">
            <div class="rt r1 act"><b class="ra">A</b><span>Toolbox</span></div>
            <div class="rt r2"><svg viewBox="0 0 12 12"><path d="M1 6h4v5H1z" fill="#c34fc0"/><path d="M6 1h5v5H6z" fill="#2f8f9c"/><path d="M3 6l4-3" stroke="#223"/></svg><span>Animations</span></div>
            <div class="rt r3"><svg viewBox="0 0 12 12"><path d="M6 0v12M9 0v12M3 3h9M3 8h9" stroke="#777"/><path d="M1 5h6v6H1z" fill="#eab94e" stroke="#a77c24"/></svg><span>Layout</span></div>
            <div class="rt r4"><svg viewBox="0 0 12 12"><path d="M1 5h10v6H1z" fill="#eef" stroke="#446"/><path d="M6 0v6M3 1l6 4M9 1L3 5" stroke="#b03fb0" stroke-width="1.500"/></svg><span>Instructions</span></div>
            <div class="rt r5"><svg viewBox="0 0 12 12"><path d="M1 1h8v9H1z" fill="#fff" stroke="#777"/><path d="M4 7l3 3 4-6" fill="none" stroke="#1b913a" stroke-width="2"/></svg><span>Tasks</span></div>
            <div class="rt r6"><svg viewBox="0 0 12 12"><path d="M1 1h3v10H1z" fill="#37a0a0"/><path d="M5 1h3v10H5z" fill="#3658c0"/><path d="M9 1h2v10H9z" fill="#74408c"/></svg><span>Libraries</span></div>
            <div class="rt r7"><span>Add-ins</span></div>
        </div>
    </div>

    <div class="portal">
        <div class="pv"><svg><use href="#tri-l"/></svg>Portal view</div>
        <div class="docs">
            <span class="d1"><svg><use href="#overview"/></svg>Overview</span><span class="d2"><svg><use href="#screen"/></svg>Root screen</span><span class="d3"><svg><use href="#screen"/></svg>Screen0</span><span class="d4 act"><svg><use href="#screen"/></svg>Screen_User</span><span class="d5"><svg><use href="#task"/></svg>Scheduled ta...</span><span class="d6"><svg><use href="#users"/></svg>User adminis...</span><span class="d7"><svg><use href="#wrench"/></svg>Runtime sett...</span><span class="d8"><svg><use href="#global"/></svg>Global screen</span>
        </div>
        <div class="status"><svg class="monitor" viewBox="0 0 12 12"><path d="M0 0h12v12H0z" fill="#ddd"/><path d="M2.500 2h4v4h-4zM8 5h2M9 4v2M1 8.500h10" fill="none" stroke="#445"/><path d="M2 10h8" stroke="#445" stroke-dasharray="2 1"/></svg><div class="msg"><b>i</b>Password was changed.</div></div>
    </div>

    <div class="taskbar">
        <svg class="win" viewBox="0 0 12 12"><path d="M0 1.700l5.200-.7v4.700H0zM5.900 .9L12 0v5.700H5.900zM0 6.300h5.200V11L0 10.300zM5.900 6.300H12V12l-6.100-.9z" fill="#f3f3f3"/></svg>
        <div class="wsearch"><svg viewBox="0 0 12 12"><circle cx="7.300" cy="4.700" r="3.700" fill="none" stroke="#222"/><path d="M4.600 7.400L.8 11.200" stroke="#222"/></svg>Type here to search</div>
        <div class="apps">
            <span><svg viewBox="0 0 16 16"><path d="M2 2v2h8V2M2 14v-2h8v2M2 6h8v4H2zM13.500 1v14" fill="none" stroke="#eee" stroke-width="1.300"/><path d="M12.500 5h2v3h-2z" fill="#eee"/></svg></span>
            <span><svg viewBox="0 0 16 16"><circle cx="8" cy="8" r="8" fill="#1479c9"/><path d="M0 7c1-8 14-10 16-1 0 4-5 5-6 3 1-3-1-5-4-5-3 0-5 1-6 3z" fill="#42c6a2"/><path d="M6 8c-2 4 2 8 8 5-3 5-13 4-12-2 0-3 4-4 4-3z" fill="#0c4ba0"/></svg></span>
            <span class="run"><svg viewBox="0 0 16 16"><path d="M0 2h6l1 2h9v11H0z" fill="#f7c948"/><path d="M3 8h10v7h-3v-3H6v3H3z" fill="#3a93dc"/></svg></span>
            <span><svg viewBox="0 0 16 16"><path d="M0 6l8-5 8 5v9H0z" fill="#1568b8"/><path d="M2 5h12v6H2z" fill="#fff"/><path d="M0 6l8 5 8-5v9H0z" fill="#2fa9ec"/></svg></span>
            <span><svg viewBox="0 0 16 16"><circle cx="8" cy="8" r="8" fill="#e03e30"/><path d="M1 4.200L6 13l-1 2.400A8 8 0 0 1 1 4.200z" fill="#2da44e"/><path d="M8 4.500h7.200A8 8 0 0 1 6 15.800L11 9z" fill="#f7c93a"/><path d="M1 4.200l4 7 2 4.600A8 8 0 0 1 1 4.200z" fill="#2da44e"/><circle cx="8" cy="8" r="3.600" fill="#3f83ee" stroke="#fff" stroke-width="1.200"/></svg></span>
            <span class="run tia"><b>TIA<br>V16</b></span>
            <span class="run"><svg viewBox="0 0 16 16"><circle cx="8" cy="8" r="7.300" fill="#26272b" stroke="#ccc" stroke-width="1.200"/><path d="M8 8c-3-3-1-6 1-6M8 8c4-1 6 2 5 4M8 8c-1 4-5 4-6 2" fill="none" stroke="#ccc" stroke-width="2"/></svg></span>
        </div>
        <div class="tray">
            <svg viewBox="0 0 12 12"><path d="M0 0h12v12H0z" fill="#4fb3d9"/><path d="M2 8l4-5 4 6" fill="none" stroke="#1a6c8c" stroke-width="1.500"/></svg>
            <svg viewBox="0 0 12 12"><path d="M0 0h12v12H0z" fill="#e98230"/><path d="M6 2l3 5H3zM2 9h8" fill="none" stroke="#fff" stroke-width="1.300"/></svg>
            <svg viewBox="0 0 12 12"><circle cx="6" cy="6" r="5.300" fill="#222" stroke="#ccc"/><path d="M6 6l3-2M6 6L4 3" stroke="#ccc" stroke-width="1.500"/><circle cx="3" cy="9" r="2.500" fill="#d22"/></svg>
            <svg viewBox="0 0 12 12"><path d="M1 1l5-1 5 1v5c0 3-2 5-5 6-3-1-5-3-5-6z" fill="#eee"/><path d="M6 0v12M1 5h10" stroke="#333"/><path d="M8 5l4 7H5z" fill="#f5c62c"/></svg>
            <svg viewBox="0 0 12 12"><path d="M0 1h12v10H0z" fill="#5d6478"/><path d="M1 3h10M1 6h10M1 9h10" stroke="#c9cde0" stroke-dasharray="2 1"/></svg>
            <svg viewBox="0 0 12 12"><path d="M0 1h12v10H0z" fill="#4a46c0"/><path d="M1 3h6M1 6h10M4 9h7" stroke="#dde" stroke-dasharray="2 1"/></svg>
            <svg viewBox="0 0 12 12"><path d="M1 6l6-5v10z" fill="#e0563c"/></svg>
            <svg viewBox="0 0 12 12"><ellipse cx="6" cy="6" rx="4.500" ry="6" fill="#1f86dc"/><path d="M4 4l4 4-2 2V2l2 2-4 4" fill="none" stroke="#fff"/></svg>
            <svg viewBox="0 0 12 12"><path d="M1 1h10v8H8l-1 3-1-3H1z" fill="#8b8b8b"/></svg>
            <svg viewBox="0 0 12 12"><path d="M4 1h4v3H4zM3 4h6v7H3z" fill="none" stroke="#ddd" stroke-width="1.200"/></svg>
            <svg viewBox="0 0 12 12"><path d="M1 3h9v6H1zM10 5h1.500v2H10" fill="none" stroke="#eee"/><path d="M2 4h4v4H2z" fill="#eee"/></svg>
            <svg viewBox="0 0 12 12"><path d="M1 11C1 6 6 1 11 1M4 11c0-4 3-7 7-7M7 11c0-2 2-4 4-4" fill="none" stroke="#bbb"/><circle cx="10" cy="10" r="1.500" fill="#eee"/></svg>
            <svg viewBox="0 0 12 12"><path d="M1 4h2l3-3v10L3 8H1z" fill="none" stroke="#ddd"/><path d="M8 4c1 1 1 3 0 4M10 2c2 2 2 6 0 8" fill="none" stroke="#aaa"/></svg>
        </div>
        <div class="lang">ENG<br>TRQ</div>
        <div class="clock">3:51 PM<br>12/15/2020</div>
        <div class="notif"><svg viewBox="0 0 16 16"><path d="M0 1h12v9H6l-3 3v-3H0z" fill="#f2f2f2"/><path d="M2 3.500h8M2 5.500h8M2 7.500h5" stroke="#333"/><circle cx="11.500" cy="10.500" r="4.300" fill="#26272b" stroke="#bbb"/></svg><em>1</em></div>
    </div>
</body>
</html>
```

FILE: styles.css
```css
* {
    box-sizing: border-box;
}

body {
    margin: 0;
    width: 1280px;
    height: 720px;
    overflow: hidden;
    display: flex;
    flex-direction: column;
    font-family: "Noto Sans", "Open Sans", sans-serif;
    font-size: 8px;
    color: #303138;
    background: #1a1a1a;
    white-space: nowrap;
    line-height: 12px;
}

.sprite {
    display: none;
}

svg {
    display: block;
    flex: none;
}

em {
    font-style: normal;
}

.white {
    color: #fff;
}

/* title bar */
.titlebar {
    height: 15px;
    flex: none;
    display: flex;
    align-items: center;
    padding: 2px 3px 0 4px;
    background: linear-gradient(#8f8f8f 0, #8f8f8f 2px, #555 4px, #1b1c18 5px);
    color: #f2f2f2;
}

.logo {
    width: 14px;
    font: bold 4.5px/6px "Noto Sans", sans-serif;
    color: #aab8d8;
}

.title {
    flex: 1;
    font-size: 9px;
    font-weight: 600;
    letter-spacing: -.05px;
}

.winbtns {
    display: flex;
    gap: 2px;
}

.winbtns svg {
    width: 9px;
    height: 9px;
}

/* menu and main toolbar */
.top {
    height: 34px;
    flex: none;
    display: flex;
    justify-content: space-between;
    background: #cbcbcb;
    border-bottom: 1px solid #999;
}

.menu {
    display: flex;
    padding: 4px 0 0 8px;
    gap: 10.5px;
    height: 17px;
    font-size: 8px;
}

.toolbar {
    display: flex;
    height: 16px;
}

.toolbar svg {
    width: 12px;
    height: 12px;
}

.grp {
    display: flex;
    align-items: center;
    gap: 4px;
    height: 14px;
    padding-left: 3px;
    border-left: 1px dotted #999;
    font-size: 8px;
}

svg.dd {
    width: 6px !important;
    height: 9px !important;
    color: #222;
}

.off,
svg.dd.off {
    color: #8b8b8b;
}

.g1 { width: 102px; padding-left: 8px; gap: 3px; border: 0; }
.g1 span { letter-spacing: -.1px; }
.g2 { width: 19px; }
.g3 { width: 70px; }
.g4 { width: 50px; padding-left: 0; gap: 3px; }
.g5 { width: 84px; padding-left: 1px; border: 0; }
.g6 { width: 108px; padding-left: 0; gap: 3px; margin-left: -2px; }
.g7 { width: 53px; margin-left: 2px; }
.g8 { width: 18px; }
.g9 { width: 35px; }
.g10 { padding-left: 4px; gap: 5px; }
.g6 .on { width: 37px; color: #111; }
.g6 span { letter-spacing: -.1px; }

.search {
    width: 80px;
    height: 12px;
    padding-left: 2px;
    background: #fff;
    border: 1px solid #999;
    color: #888;
    line-height: 10px;
}

.brand {
    padding: 8px 16px 0 0;
    text-align: right;
    font-size: 9.2px;
    font-weight: 500;
    color: #222;
}

.brand div {
    margin-right: 15px;
}

.brand b {
    display: block;
    margin-top: -2px;
    font-size: 11px;
    font-weight: 600;
    color: #6a6a6a;
    line-height: 12px;
}

/* main area */
.main {
    height: 624px;
    flex: none;
    display: flex;
}

.strip {
    width: 16px;
    background: linear-gradient(90deg, #a5a6a8, #b0b0b2);
    border-right: 1px solid #333;
    padding-top: 16px;
}

.strip-tab {
    height: 148px;
    border-top: 1px solid #ddd;
    border-bottom: 2px solid #d6d6d6;
    writing-mode: vertical-rl;
    transform: rotate(180deg);
    padding-top: 44px;
    line-height: 15px;
    font-size: 9px;
    font-weight: 600;
    color: #f6f6f6;
}

.left {
    width: 164px;
    display: flex;
    flex-direction: column;
}

.phead {
    height: 18px;
    flex: none;
    display: flex;
    align-items: center;
    gap: 3px;
    padding: 0 4px 0 3px;
    background: linear-gradient(#9b9b9b, #b4b4b4);
    border-bottom: 2px solid #f0f0f0;
    color: #fff;
    font-size: 9px;
    font-weight: 500;
}

.phead span {
    flex: 1;
}

.phead svg {
    width: 9px;
    height: 9px;
}

.tabs {
    height: 17px;
    flex: none;
    display: flex;
    align-items: flex-end;
    padding-left: 4px;
    background: #cbcbcb;
    border-bottom: 1px solid #8a8a8a;
}

.tab {
    height: 14px;
    border: 1px solid #888;
    border-bottom: 0;
    background: linear-gradient(#e2e2e2, #c4c4c4);
    font-size: 9px;
    font-weight: 500;
    line-height: 14px;
    color: #555;
    padding-left: 7px;
}

.tab.act {
    height: 15px;
    margin-bottom: -1px;
    background: #f0f0f0;
    font-weight: 600;
    color: #111;
    letter-spacing: -.2px;
}

.t-dev { width: 55px; }
.t-plant { width: 78px; }

.ltools {
    height: 18px;
    flex: none;
    display: flex;
    align-items: center;
    padding: 0 6px 0 4px;
    gap: 2px;
    background: #ebebeb;
}

.ltools svg {
    width: 12px;
    height: 12px;
}

.ltools i {
    flex: 1;
}

.ltools .sel {
    width: 15px;
    height: 14px;
    padding: 1px;
    border: 1px solid #88a0d0;
    border-radius: 2px;
    background: #f4f8ff;
}

.lgap {
    height: 14px;
    flex: none;
    background: #c6c6c8;
    border-top: 1px solid #aaa;
}

.treewrap {
    height: 385px;
    flex: none;
    display: flex;
    overflow: hidden;
}

.tree {
    width: 151px;
    background: linear-gradient(90deg, transparent 137px, #d0d0d0 137px, #d0d0d0 138px, transparent 138px) #f0f0f0;
}

.row {
    height: 12.67px;
    display: flex;
    align-items: center;
    border-bottom: 1px solid rgba(255, 255, 255, .7);
    font-size: 8px;
}

.row svg {
    width: 11px;
    height: 11px;
    margin-right: 3px;
    margin-left: -1px;
}

.row svg.ar,
.row > i {
    width: 8px;
    height: 8px;
    margin: 0 3px 0 2px;
}

.l1 { padding-left: 12px; }
.l2 { padding-left: 24px; }
.l3 { padding-left: 36px; }

.row.dark {
    background: rgba(0, 0, 0, .05);
}

.row.bold {
    font-weight: 600;
    letter-spacing: -.15px;
}

.row.cur {
    padding-left: 35px;
    background: #d3dae0;
    border: 1px solid #c0c8d0;
    border-left: 1px dotted #555;
}

.vscroll {
    display: flex;
    flex-direction: column;
    width: 13px;
    background: #bdbdc0;
    border-left: 1px solid #999;
}

.vscroll svg {
    width: 12px;
    height: 12px;
    padding: 2px;
    background: #ececec;
    border: 1px solid #aaa;
}

.thumb {
    display: flex;
    align-items: center;
    justify-content: center;
    background: linear-gradient(90deg, #f0f0f0, #ddd);
    border: 1px solid #999;
}

.grip {
    width: 5px;
    height: 5px;
    background: repeating-linear-gradient(#777 0, #777 1px, transparent 1px, transparent 2px);
}

.grip.gv {
    background: repeating-linear-gradient(90deg, #777 0, #777 1px, transparent 1px, transparent 2px);
}

.tree-v .thumb {
    height: 172px;
}

.fillr {
    flex: 1;
}

.hscroll {
    height: 12px;
    flex: none;
    display: flex;
    background: #c4c4c4;
}

.hscroll svg {
    width: 12px;
    height: 12px;
    padding: 1px;
    background: #ececec;
    border: 1px solid #aaa;
}

.hscroll .thumb {
    width: 122px;
    background: linear-gradient(#f0f0f0, #ddd);
}

.hscroll .r {
    margin-left: 5px;
}

.sec {
    height: 16px;
    flex: none;
    display: flex;
    align-items: center;
    border-top: 1px solid #777;
    border-bottom: 1px solid #999;
    background: linear-gradient(#ececec, #d4d4d4);
    font-size: 9px;
    font-weight: 600;
}

.sec svg {
    width: 8px;
    height: 8px;
    margin: 0 3px 0 2px;
}

.sec span {
    border-left: 1px solid #aaa;
    padding-left: 2px;
    line-height: 14px;
}

.details {
    height: 17px;
    border-top: 2px solid #1c2030;
}

.dgap {
    height: 16px;
    background: #cbcbcb;
    border-bottom: 1px solid #888;
}

.dblank {
    height: 18px;
    background: #efefef;
}

.dhead {
    display: flex;
    height: 13px;
    background: linear-gradient(#e6e6e6, #d2d2d2);
    border: 1px solid #bbb;
    border-width: 1px 0;
}

.dhead span {
    width: 12px;
}

.dhead .nm {
    width: 108px;
    padding-left: 2px;
    border: 1px solid #bbb;
    border-width: 0 1px;
    line-height: 11px;
}

.dbody {
    flex: 1;
    background: repeating-linear-gradient(#ececec 0, #f1f1f1 11.6px, #fff 11.7px, #fff 12.67px);
}

/* editor */
.center {
    width: 916px;
    border: 0 solid #14182c;
    border-width: 0 2px;
    display: flex;
    flex-direction: column;
}

.ehead {
    height: 18px;
    flex: none;
    display: flex;
    align-items: center;
    padding: 0 4px 0 3px;
    background: #2c3450;
    border-bottom: 2px solid #e9ebf2;
    color: #fff;
    font-size: 9px;
    font-weight: 500;
}

.ehead > svg {
    width: 8px;
    height: 8px;
    margin: 0 4.5px;
}

.ehead span {
    letter-spacing: -.03px;
}

.ehead .winbtns {
    margin-left: auto;
    gap: 3px;
}

.egap {
    height: 17px;
    flex: none;
    background: #cbcbcb;
    border-bottom: 1px solid #999;
}

.etools {
    height: 18px;
    flex: none;
    display: flex;
    align-items: center;
    padding-left: 2px;
    background: #ebebeb;
}

.etools svg {
    width: 12px;
    height: 12px;
}

.combo {
    display: flex;
    height: 12px;
    background: #fff;
    border: 1px solid #888;
    line-height: 10px;
}

.combo span {
    flex: 1;
    padding-left: 1px;
}

.combo em,
.drop {
    width: 11px;
    background: #e4e4e4;
    border-left: 1px solid #999;
}

.combo em svg,
.drop svg {
    width: 8px;
    height: 8px;
    margin: 1px 0 0 1px;
}

em.lst {
    background: linear-gradient(#7782b4, #7782b4) 3px 2px / 5px 1px no-repeat, linear-gradient(#7782b4, #7782b4) 3px 4px / 5px 1px no-repeat, linear-gradient(#7782b4, #7782b4) 3px 6px / 5px 1px no-repeat, #e6e8f4;
}

.c-font { width: 75px; margin-right: 6px; }
.c-size { width: 26px; margin-right: 3px; }

.ch {
    width: 16px;
    text-align: center;
    font-size: 10.5px;
    color: #1a1d48;
}

.ch.it { font-style: italic; }
.ch.un { text-decoration: underline; }
.ch.st { text-decoration: line-through; font-size: 10px; color: #444; }

.pair {
    width: 23.400px;
    height: 14px;
    display: flex;
    align-items: center;
    gap: 1px;
    padding-left: 2px;
}

.pair b {
    width: 12px;
    font-size: 10px;
    color: #1a1d48;
}

.pair sup {
    font-size: 7px;
    line-height: 1px;
}

.pair .fc {
    height: 12px;
    line-height: 10px;
    text-align: center;
    border-bottom: 2px solid #111;
}

.pair.sp {
    width: 26.500px;
    padding-left: 4px;
    border-left: 1px dotted #aaa;
}

.pair.box {
    width: 21px;
    margin: 0 3px;
    padding-left: 1px;
    border: 1px solid #888;
    background: #e2e4e2;
}

.pair.p1 { width: 22.4px; }
.pair.p2 { width: 24px; }
.pair.one,
.pair.sp.one { width: 18.5px; }

.work {
    height: 365px;
    flex: none;
    display: flex;
}

.canvas {
    position: relative;
    width: 901px;
    overflow: hidden;
    background: linear-gradient(90deg, #a9a9ab 708px, #d9d9d9 708px);
}

.panel {
    position: absolute;
    left: 44px;
    top: 0;
    width: 619px;
    height: 365px;
    background: #76869a;
}

.touch {
    position: absolute;
    left: 621px;
    top: 36px;
    width: 42px;
    height: 137px;
    background: #a9a9ab;
    overflow: visible;
}

.touch text {
    font-family: Roboto, sans-serif;
    font-size: 54px;
    fill: #76869a;
    stroke: #76869a;
    stroke-width: .4px;
}

.screen {
    position: absolute;
    left: 88px;
    top: 36px;
    width: 533px;
    height: 320px;
    background: #b3b3b3;
    font-size: 11px;
    font-weight: bold;
}

.dots-bg {
    position: absolute;
    left: 0;
    top: 0;
}

.uv {
    position: absolute;
    left: 1px;
    top: 2px;
    width: 531px;
    height: 160px;
    display: flex;
    border: 1px solid #777a88;
    border-radius: 2px;
    background: #e4e4ef;
}

.uvt {
    width: 506px;
    border-right: 1px solid #888;
}

.uvh {
    display: flex;
    height: 16px;
    background: linear-gradient(#88888c, #5d5c68);
    color: #fff;
    font-size: 10.5px;
    line-height: 16px;
}

.uvh span {
    padding-left: 2px;
    border-right: 1px solid #5d5c66;
}

.uvb {
    display: flex;
    height: 142px;
    background: repeating-linear-gradient(#fff 0, #fff 14px, #e4e4ee 14px, #e4e4ee 28px);
}

.uvb span {
    border-right: 1px solid #fafafa;
}

.u1 { width: 104px; }
.u2 { width: 269px; }
.u3 { width: 53px; }
.u4 { flex: 1; }

.uvs {
    width: 23px;
    height: 158px;
}

.lbl {
    position: absolute;
    left: 9px;
    top: 182px;
    color: #2c2d40;
}

.io {
    position: absolute;
    top: 197px;
    width: 94px;
    height: 24px;
    border: 2px solid #4c4d5a;
    box-shadow: 0 0 0 1px #8c8d98;
    background: #fff;
    padding: 0 2px;
    overflow: hidden;
    line-height: 20px;
    font-family: "DejaVu Sans Condensed", "DejaVu Sans", sans-serif;
    font-stretch: condensed;
    font-size: 10.6px;
    color: #1c1d2c;
}

.io span {
    display: block;
    overflow: hidden;
}

.io0 { left: 8px; top: 201px; width: 125px; height: 26px; line-height: 23px; }
.io1 { left: 207px; width: 92px; top: 198px; height: 22px; line-height: 18px; }
.io2 { left: 308px; width: 92px; top: 198px; height: 22px; line-height: 18px; }
.io3 { left: 409px; width: 92px; top: 198px; height: 22px; line-height: 18px; }

.btn {
    position: absolute;
    top: 230px;
    width: 92px;
    height: 28px;
    display: flex;
    align-items: center;
    justify-content: center;
    text-align: center;
    border: 1px solid #3f404c;
    border-radius: 1px;
    background: linear-gradient(#75757f, #5a5965);
    color: #fff;
}

.b1 { left: 207px; }
.b2 { left: 308px; }
.b3 { left: 410px; padding-right: 4px; }
.b4 { left: 7px; top: 293px; width: 128px; height: 21px; }

.sw {
    position: absolute;
    left: 458px;
    top: 292px;
    width: 64px;
    height: 21px;
    padding: 0 19px;
    border: 1px solid #444;
}

.sw div {
    height: 19px;
    padding: 3px 6px;
    border: 1px solid #444;
    background: #dcdcdc;
}

.sw svg {
    width: 12px;
    height: 12px;
}

.handles {
    position: absolute;
    left: 204px;
    top: 195px;
    width: 98px;
    height: 28px;
}

.move {
    position: absolute;
    left: 229px;
    top: 205px;
    width: 14px;
    height: 14px;
}

.work-v {
    width: 11px;
}

.work-v svg {
    width: 10px;
    height: 11px;
    padding: 1px;
}

.work-v .space { height: 35px; }
.work-v .thumb { height: 240px; }

.zoombar {
    height: 13px;
    flex: none;
    display: flex;
    align-items: center;
    justify-content: flex-end;
    background: #e6e7eb;
}

.c-zoom {
    width: 104px;
    height: 11px;
    line-height: 9px;
}

.slider {
    width: 46px;
    height: 10px;
    margin-left: 13px;
}

.fit {
    width: 9px;
    height: 9px;
    margin: 0 1px 0 9px;
}

/* inspector */
.insp {
    flex: 1;
    border-top: 2px solid #0c0e1c;
    display: flex;
    flex-direction: column;
    background: #ebebeb;
}

.ihead {
    height: 18px;
    flex: none;
    display: flex;
    align-items: flex-end;
    padding-left: 2px;
    background: #afafaf;
    border-bottom: 2px solid #f0f0f0;
}

.ihead .it {
    flex: 1;
    font-size: 9px;
    font-weight: 500;
    line-height: 15px;
    color: #fff;
}

.itabs {
    display: flex;
    height: 14px;
}

.itab {
    display: flex;
    align-items: center;
    gap: 2px;
    padding-left: 1px;
    border: 1px solid #888;
    border-bottom: 0;
    background: linear-gradient(#dedede, #c2c2c2);
    font-size: 9px;
    font-weight: 500;
    letter-spacing: -.1px;
    color: #555;
}

.itab.act {
    gap: 1px;
    background: #ececec;
    color: #111;
}

.itab svg {
    width: 11px;
    height: 11px;
}

.itab b,
.msg b {
    width: 9px;
    height: 9px;
    margin-left: 5px;
    border-radius: 50%;
    background: #f0d420;
    color: #111;
    font-size: 7px;
    line-height: 9px;
    text-align: center;
}

.i1 { width: 75px; }
.i2 { width: 51px; }
.i3 { width: 80px; }

.ibtns {
    display: flex;
    gap: 3px;
    margin: 0 4px 4px 13px;
}

.ibtns svg {
    width: 9px;
    height: 9px;
}

.ptabs {
    height: 16px;
    padding-left: 3px;
    border-bottom: 1px solid #999;
}

.q1 { width: 67px; margin-right: 1px; }
.q2 { width: 73px; }
.q3 { width: 51px; }
.q4 { width: 46px; }

.ibody {
    flex: 1;
    display: flex;
}

.plist {
    width: 115px;
    padding-top: 6px;
    background: #efefef;
}

.ptitle {
    display: flex;
    gap: 3px;
    height: 16px;
    padding-left: 3px;
}

.ptitle svg {
    width: 12px;
    height: 12px;
}

.pi {
    height: 12.67px;
    padding-left: 12.5px;
    line-height: 12.67px;
}

.ptitle + .pi {
    margin-top: 1px;
}

.pi .on {
    display: inline-block;
    height: 12px;
    line-height: 12px;
    background: #c3c9d4;
}

.splitter {
    width: 5px;
    margin-top: 3px;
    padding-top: 56px;
    border: 1px solid #aaa;
    border-width: 1px 1px 0;
    background: #d8d8d8;
}

.splitter svg {
    width: 5px;
    height: 15px;
    margin: 0 0 8px -1px;
    background: #bbb;
}

.form {
    width: 775px;
    padding: 9px 0 0 8px;
}

.ftitle {
    display: flex;
    align-items: center;
    gap: 4px;
    font-size: 9px;
}

.ftitle span {
    letter-spacing: -.1px;
}

.ftitle i {
    width: 729px;
    height: 1px;
    margin-top: 7px;
    background: #999;
}

.fcols {
    display: flex;
    gap: 4px;
    padding-top: 6px;
}

.box {
    background: #cbcbcb;
}

.form .box {
    border: 1px solid #c0c0c0;
}

.fcol {
    width: 381px;
    display: flex;
    flex-direction: column;
    gap: 4px;
}

.box h4 {
    margin: 0;
    padding: 2px 9px 0;
    height: 21px;
    font-size: 9px;
    font-weight: 600;
    line-height: 13px;
    letter-spacing: -.1px;
}

.proc { height: 75px; }
.type { height: 45px; }
.type h4 { height: 22px; }
.format { width: 382px; height: 108px; }

.fr {
    height: 16px;
    display: flex;
    align-items: center;
    padding-right: 7px;
}

.fr label {
    width: 67px;
    margin-right: 6px;
    text-align: right;
    letter-spacing: -.05px;
}

.format .fr label {
    width: 105px;
}

.inp {
    height: 12px;
    padding-left: 2px;
    background: #fff;
    border: 1px solid #999;
    line-height: 10px;
}

.grow { flex: 1; }
.addr { width: 229px; margin-right: 3px; }
.num { width: 20px; }

.inp.dis {
    background: #d8d8d8;
    border-color: #d3d3d3;
}

.fr em {
    height: 12px;
    width: 11px;
    border: 1px solid #999;
    line-height: 8px;
    text-align: center;
}

.fr .dots {
    background: #eee;
}

.fr .spin {
    background: #999;
}

.spin svg {
    width: 9px;
    height: 10px;
}

.gray,
.gray .inp {
    color: #8e8e8e;
    background: none;
}

.fr.gray .spin {
    background: #ddd;
}

.link {
    width: 9px;
    height: 9px;
    margin: 0 4px 0 3px;
}

.chk {
    width: 10px;
    height: 10px;
    border: 1px solid #777;
    border-radius: 1px;
    background: #e8e8e8;
}

.form-v {
    margin: 2px 0 0 1px;
}

.form-v .thumb {
    flex: 1;
}

/* toolbox */
.toolbox {
    width: 168px;
    display: flex;
    flex-direction: column;
    background: #efefef;
    border-right: 1px solid #555;
}

.opts {
    height: 17px;
    flex: none;
    padding-left: 3px;
    line-height: 17px;
    font-size: 9px;
    font-weight: 600;
    letter-spacing: -.15px;
    background: linear-gradient(#f4f4f4, #cfcfcf);
    border-bottom: 1px solid #999;
}

.ttools {
    height: 18px;
    flex: none;
    display: flex;
    align-items: center;
    gap: 4px;
    padding: 0 3px 0 4px;
}

.ttools svg {
    width: 12px;
    height: 12px;
}

.ttools .sm {
    width: 7px;
    height: 7px;
    margin: -5px 0 0 -3px;
}

.ttools i {
    flex: 1;
}

.pal {
    display: grid;
    grid-template-columns: repeat(6, 27.900px);
    grid-auto-rows: 24px;
    align-items: center;
    justify-items: start;
    padding: 1px 0 0 4px;
    flex: none;
}

.pal > svg {
    width: 19px;
    height: 19px;
}

.h1 { height: 100px; }
.h2 { height: 308px; }

.bigA {
    width: 18px;
    text-align: center;
    font-size: 17px;
    color: #12163c;
}

.iof,
.sio {
    width: 19px;
    height: 11px;
    border: 1px solid #555;
    background: #ddd;
    font-size: 8px;
    font-weight: bold;
    line-height: 9px;
    text-align: center;
}

.sio {
    display: flex;
    background: #fff;
    border-color: #999;
}

.sio svg {
    width: 7px;
    height: 9px;
    background: #ddd;
    margin-left: 1px;
}

.swi {
    width: 18px;
    height: 18px;
    border: 1px solid #777;
    background: #ccc;
}

.swi small {
    display: block;
    font-size: 6px;
    font-weight: bold;
    line-height: 8px;
    padding-left: 2px;
}

.swi u {
    display: block;
    width: 13px;
    height: 6px;
    margin-left: 2px;
    background: linear-gradient(90deg, #86a0f0 50%, #f4f4f4 50%);
    border: 1px solid #777;
}

.last {
    height: 15px;
}

.rtabs {
    width: 16px;
    padding: 21px 2px 0 0;
    background: #a4a4a6;
}

.rt {
    display: flex;
    flex-direction: column;
    align-items: center;
    margin-bottom: 2px;
    padding-top: 2px;
    background: linear-gradient(90deg, #d0d0d0, #bdbdbd);
    border: 1px solid #777;
    border-left: 0;
    color: #555;
}

.rt.act {
    background: #f6f6f6;
    color: #111;
}

.rt svg {
    width: 11px;
    height: 11px;
}

.rt span {
    writing-mode: vertical-rl;
    font-size: 9px;
    font-weight: 500;
    letter-spacing: -.1px;
    line-height: 12px;
    margin-top: 1px;
}

.ra {
    width: 11px;
    height: 12px;
    font-size: 9px;
    border-radius: 4px 6px 6px 0;
    background: #b4c2ff;
    color: #1c2a8c;
    text-align: center;
}

.r1 { height: 62px; }
.r2 { height: 80px; }
.r3 { height: 58px; }
.r4 { height: 80px; }
.r5 { height: 52px; }
.r6 { height: 62px; }
.r7 { height: 56px; }

.r7 span {
    margin-top: 8px;
}

/* portal bar */
.portal {
    height: 20px;
    flex: none;
    display: flex;
    align-items: center;
    background: #191919;
}

.pv {
    width: 120px;
    display: flex;
    align-items: center;
    gap: 5px;
    padding-left: 22px;
    color: #fff;
    font-size: 9px;
    font-weight: 600;
}

.pv svg {
    width: 8px;
    height: 8px;
}

.docs {
    display: flex;
    gap: 2px;
    flex: 1;
}

.docs span {
    height: 14px;
    display: flex;
    align-items: center;
    gap: 4px;
    padding-left: 2px;
    background: #c4c4c4;
    letter-spacing: -.1px;
}

.docs .act {
    background: #fff;
    font-weight: 500;
}

.docs svg {
    width: 10px;
    height: 10px;
}

.d1, .d4, .d6 { width: 76px; }
.d2, .d3, .d5 { width: 75px; }
.d7 { width: 71px; }
.d8 { width: 79px; }

.status {
    display: flex;
    align-items: center;
    width: 237px;
}

.monitor {
    width: 12px;
    height: 12px;
}

.msg {
    display: flex;
    align-items: center;
    gap: 3px;
    margin-left: 5px;
    height: 18px;
    border-left: 1px solid #555;
    color: #ddd;
    letter-spacing: -.25px;
}

.msg b {
    margin-left: 2px;
    background: #1c28d8;
    color: #fff;
}

/* windows taskbar */
.taskbar {
    height: 27px;
    flex: none;
    display: flex;
    align-items: center;
    background: #26272b;
    color: #f2f2f2;
}

.win {
    width: 12px;
    height: 12px;
    margin: 0 10px;
}

.wsearch {
    width: 229px;
    height: 26px;
    display: flex;
    align-items: center;
    gap: 7px;
    padding-left: 8px;
    background: #f2f2f2;
    color: #444;
    font-family: "Open Sans", sans-serif;
    font-size: 9.5px;
    letter-spacing: -.1px;
}

.wsearch svg {
    width: 12px;
    height: 12px;
}

.apps {
    display: flex;
    height: 27px;
    margin-right: auto;
}

.apps span {
    width: 33px;
    display: flex;
    align-items: center;
    justify-content: center;
    border-bottom: 2px solid transparent;
}

.apps svg {
    width: 16px;
    height: 16px;
}

.apps span:first-child svg {
    width: 12px;
}

.apps .run {
    border-bottom-color: #5a9bd8;
}

.apps .tia {
    background: #484a50;
}

.tia b {
    font-size: 7.5px;
    line-height: 10px;
    color: #c2d4ee;
}

.tray {
    display: flex;
    gap: 5px;
}

.tray svg {
    width: 11px;
    height: 11px;
}

.lang,
.clock {
    font-family: "Open Sans", sans-serif;
    font-size: 8px;
    line-height: 12px;
    text-align: center;
    letter-spacing: -.3px;
}

.lang { width: 29px; }
.clock { width: 40px; }

.notif {
    position: relative;
    width: 35px;
    padding-left: 8px;
}

.notif svg {
    width: 16px;
    height: 16px;
}

.notif em {
    position: absolute;
    left: 17px;
    top: 4px;
    font-size: 7px;
}
```
